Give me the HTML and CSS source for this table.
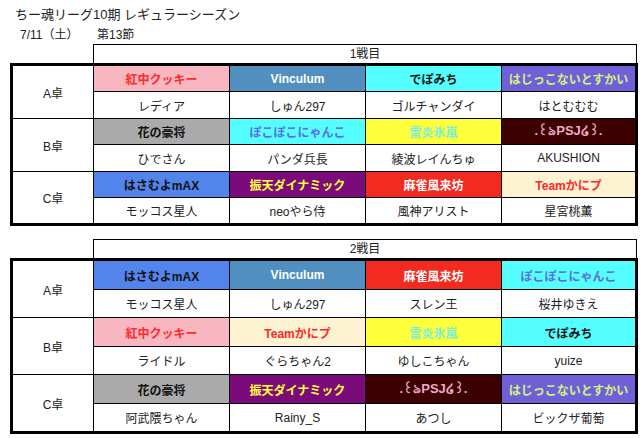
FILE: index.html
```html
<!DOCTYPE html>
<html lang="ja">
<head>
<meta charset="utf-8">
<title>ちー魂リーグ10期 レギュラーシーズン</title>
<link rel="stylesheet" href="styles.css">
</head>
<body>
<div class="page">
  <h1 class="title">ちー魂リーグ10期 レギュラーシーズン</h1>
  <div class="meta"><span class="date">7/11（土）</span><span class="sec">第13節</span></div>

  <section class="round r1">
    <div class="round-head">1戦目</div>
    <div class="round-body">
      <div class="tbl">A卓</div>
      <div class="team t-koch">紅中クッキー</div>
      <div class="team t-vinc">Vinculum</div>
      <div class="team t-depo">でぽみち</div>
      <div class="team t-haji">はじっこないとすかい</div>
      <div class="pl">レディア</div><div class="pl">しゅん297</div><div class="pl">ゴルチャンダイ</div><div class="pl">はとむむむ</div>

      <div class="tbl">B卓</div>
      <div class="team t-hana">花の豪将</div>
      <div class="team t-poko">ぽこぽこにゃんこ</div>
      <div class="team t-rai">雷炎氷嵐</div>
      <div class="team t-psj">.꒰ঌPSJ໒꒱.</div>
      <div class="pl">ひでさん</div><div class="pl">パンダ兵長</div><div class="pl">綾波レイんちゅ</div><div class="pl">AKUSHION</div>

      <div class="tbl">C卓</div>
      <div class="team t-hasa">はさむよmAX</div>
      <div class="team t-shin">振天ダイナミック</div>
      <div class="team t-mah">麻雀風来坊</div>
      <div class="team t-kani">Teamかにプ</div>
      <div class="pl">モッコス星人</div><div class="pl">neoやら侍</div><div class="pl">風神アリスト</div><div class="pl">星宮桃薫</div>
    </div>
  </section>

  <section class="round r2">
    <div class="round-head">2戦目</div>
    <div class="round-body">
      <div class="tbl">A卓</div>
      <div class="team t-hasa">はさむよmAX</div>
      <div class="team t-vinc">Vinculum</div>
      <div class="team t-mah">麻雀風来坊</div>
      <div class="team t-poko">ぽこぽこにゃんこ</div>
      <div class="pl">モッコス星人</div><div class="pl">しゅん297</div><div class="pl">スレン王</div><div class="pl">桜井ゆきえ</div>

      <div class="tbl">B卓</div>
      <div class="team t-koch">紅中クッキー</div>
      <div class="team t-kani">Teamかにプ</div>
      <div class="team t-rai">雷炎氷嵐</div>
      <div class="team t-depo">でぽみち</div>
      <div class="pl">ライドル</div><div class="pl">ぐらちゃん2</div><div class="pl">ゆしこちゃん</div><div class="pl">yuize</div>

      <div class="tbl">C卓</div>
      <div class="team t-hana">花の豪将</div>
      <div class="team t-shin">振天ダイナミック</div>
      <div class="team t-psj">.꒰ঌPSJ໒꒱.</div>
      <div class="team t-haji">はじっこないとすかい</div>
      <div class="pl">阿武隈ちゃん</div><div class="pl">Rainy_S</div><div class="pl">あつし</div><div class="pl">ビックザ葡萄</div>
    </div>
  </section>
</div>
</body>
</html>
```

FILE: styles.css
```css
* { box-sizing: border-box; }
html, body { margin: 0; padding: 0; background: #fff; }
body {
  font-family: "Liberation Sans", "Noto Sans CJK JP", sans-serif;
  color: #222;
  font-size: 12px;
}
.page { padding-top: 6px; }
.title {
  margin: 0;
  padding-left: 15px;
  font-size: 13px;
  font-weight: normal;
  line-height: 18px;
}
.meta {
  display: flex;
  margin-top: 3px;
  line-height: 16px;
  font-size: 12px;
}
.date { margin-left: 20px; width: 77px; }

.round { margin-left: 10px; width: 628px; }
.r1 { margin-top: 1px; }
.r2 { margin-top: 13px; }
.round-head {
  margin-left: 83px;
  width: 544px;
  height: 19px;
  border: 1px solid #000;
  border-bottom: none;
  text-align: center;
  line-height: 18px;
}
.round-body {
  display: grid;
  grid-template-columns: 80px 135px 135px 135px 133px;
  gap: 1px;
  background: #000;
  border: 3px solid #000;
}
.r1 .round-body { grid-template-rows: 25px 26px 25px 26px 25px 25px; }
.r2 .round-body { grid-template-rows: 28px 27px 28px 27px 28px 27px; }

.round-body > div {
  display: flex;
  align-items: center;
  justify-content: center;
  background: #fff;
  white-space: nowrap;
  overflow: hidden;
}
.tbl { grid-row: span 2; }
.team { font-weight: bold; }
.t-psj { font-size: 13px; }

.t-koch { background: #f8b6c1 !important; color: #ff2a2a; }
.t-vinc { background: #508fc0 !important; color: #fff; }
.t-depo { background: #55ffff !important; color: #111; }
.t-haji { background: #7060d8 !important; color: #d4f27a; }
.t-hana { background: #aaaaaa !important; color: #111; }
.t-poko { background: #55ffff !important; color: #5b6ee1; }
.t-rai  { background: #ffff3c !important; color: #78f0d8; }
.t-psj  { background: #3c0000 !important; color: #f0a8c8; }
.t-hasa { background: #5384ec !important; color: #111; }
.t-shin { background: #7b0b7b !important; color: #ffff40; }
.t-mah  { background: #f22a1f !important; color: #fff; }
.t-kani { background: #fdf2d2 !important; color: #ff2828; }
```
